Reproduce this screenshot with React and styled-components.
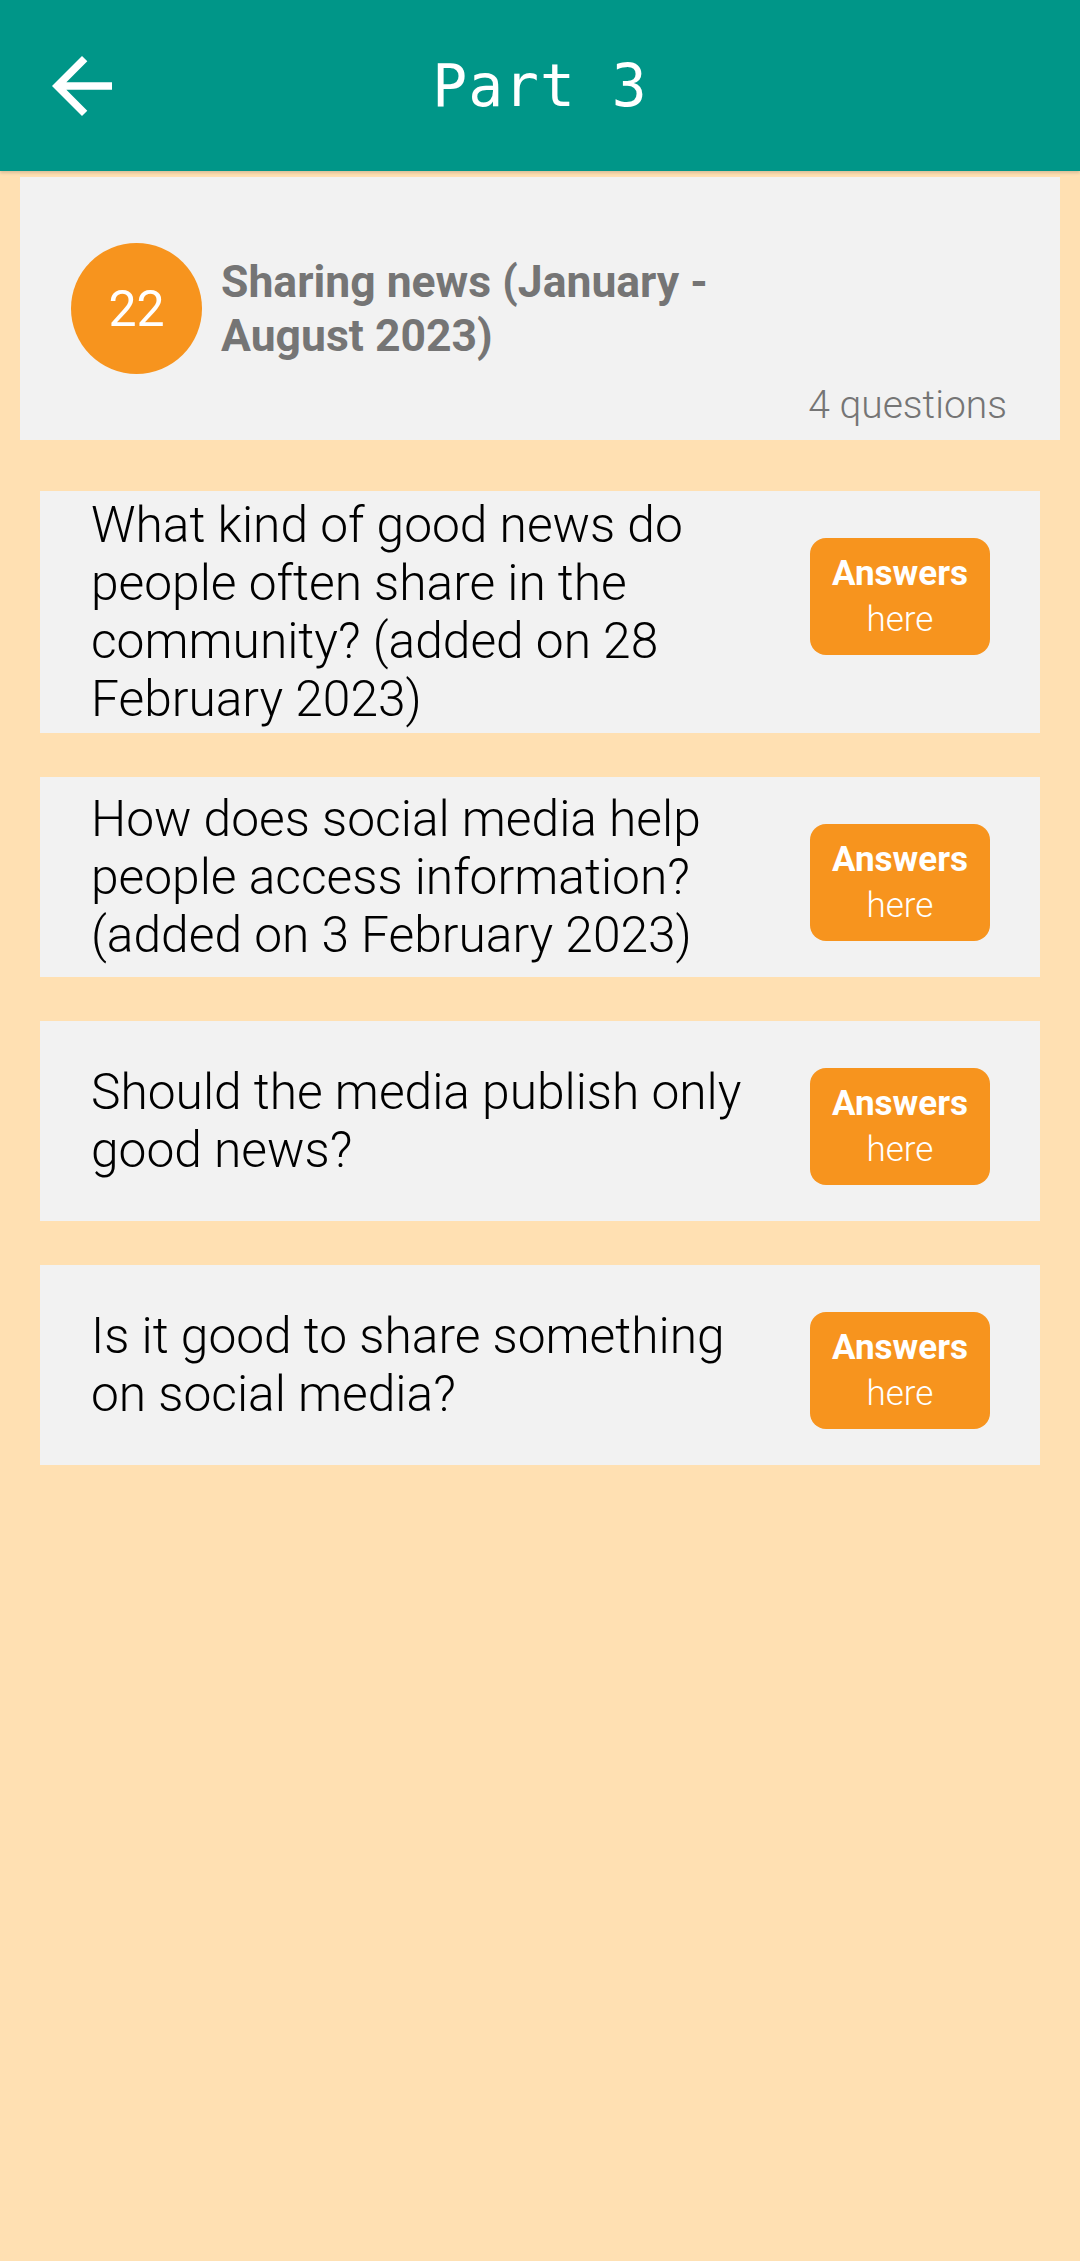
import styled, { createGlobalStyle } from "styled-components";

const questions = [
  "What kind of good news do people often share in the community? (added on 28 February 2023)",
  "How does social media help people access information? (added on 3 February 2023)",
  "Should the media publish only good news?",
  "Is it good to share something on social media?",
];

export default function App() {
  return (
    <>
      <GlobalStyle />
      <StyledHeader>
        <StyledBack aria-label="back">
          <svg width="90" height="90" viewBox="0 0 24 24">
            <path
              fill="#fff"
              d="M20 11H7.83l5.59-5.59L12 4l-8 8 8 8 1.41-1.41L7.83 13H20v-2z"
            />
          </svg>
        </StyledBack>
        <StyledTitle>Part 3</StyledTitle>
        <span />
      </StyledHeader>

      <StyledTopic>
        <StyledTopicRow>
          <StyledBadge>22</StyledBadge>
          <StyledTopicName>Sharing news (January - August 2023)</StyledTopicName>
        </StyledTopicRow>
        <StyledCount>{questions.length} questions</StyledCount>
      </StyledTopic>

      <StyledList>
        {questions.map((q) => (
          <StyledQuestion key={q}>
            <StyledQuestionText>{q}</StyledQuestionText>
            <StyledAnswers>
              <b>Answers</b>
              <span>here</span>
            </StyledAnswers>
          </StyledQuestion>
        ))}
      </StyledList>
    </>
  );
}

const GlobalStyle = createGlobalStyle`
  html, body {
    margin: 0;
    background-color: #ffe0b2;
    font-family: Roboto, "Noto Sans", sans-serif;
  }
  body {
    min-height: 2261px;
  }
`;

const StyledHeader = styled.header`
  display: grid;
  grid-template-columns: 1fr auto 1fr;
  align-items: center;
  height: 171px;
  background-color: #009688;
  box-shadow: 0 2px 3px rgba(0, 0, 0, 0.15);
`;

const StyledBack = styled.button`
  all: unset;
  cursor: pointer;
  justify-self: start;
  margin-left: 37px;
  display: flex;
`;

const StyledTitle = styled.h1`
  margin: 0;
  color: #fff;
  font-family: "DejaVu Sans Mono", "Liberation Mono", monospace;
  font-weight: 400;
  font-size: 58px;
  letter-spacing: 1px;
`;

const StyledTopic = styled.section`
  margin: 6px 20px 0;
  padding: 66px 53px 13px 51px;
  background-color: #f2f2f2;
`;

const StyledTopicRow = styled.div`
  display: flex;
  align-items: center;
  gap: 19px;
`;

const StyledBadge = styled.div`
  flex: none;
  width: 131px;
  height: 131px;
  border-radius: 50%;
  background-color: #f7941e;
  color: #fff;
  display: flex;
  align-items: center;
  justify-content: center;
  font-size: 50px;
`;

const StyledTopicName = styled.h2`
  margin: 0;
  max-width: 540px;
  color: #757575;
  font-size: 44.5px;
  font-weight: 700;
  line-height: 54px;
`;

const StyledCount = styled.p`
  margin: 9px 0 0;
  text-align: right;
  color: #757575;
  font-size: 39px;
  font-weight: 300;
  line-height: 44px;
`;

const StyledList = styled.ul`
  all: unset;
  display: flex;
  flex-direction: column;
  gap: 44px;
  margin: 51px 40px 0;
`;

const StyledQuestion = styled.li`
  display: flex;
  align-items: flex-start;
  min-height: 200px;
  background-color: #f2f2f2;
`;

const StyledQuestionText = styled.p`
  flex: 1;
  align-self: center;
  margin: 0;
  padding: 5px 0 5px 51px;
  color: #000;
  font-size: 49.7px;
  font-weight: 300;
  line-height: 58px;
`;

const StyledAnswers = styled.button`
  all: unset;
  cursor: pointer;
  flex: none;
  display: flex;
  flex-direction: column;
  align-items: center;
  justify-content: center;
  width: 180px;
  height: 117px;
  margin: 47px 50px 36px;
  border-radius: 16px;
  background-color: #f7941e;
  color: #fff;
  font-family: Roboto, sans-serif;
  font-size: 35px;
  line-height: 46px;

  b {
    font-weight: 700;
  }

  span {
    font-weight: 300;
  }
`;
